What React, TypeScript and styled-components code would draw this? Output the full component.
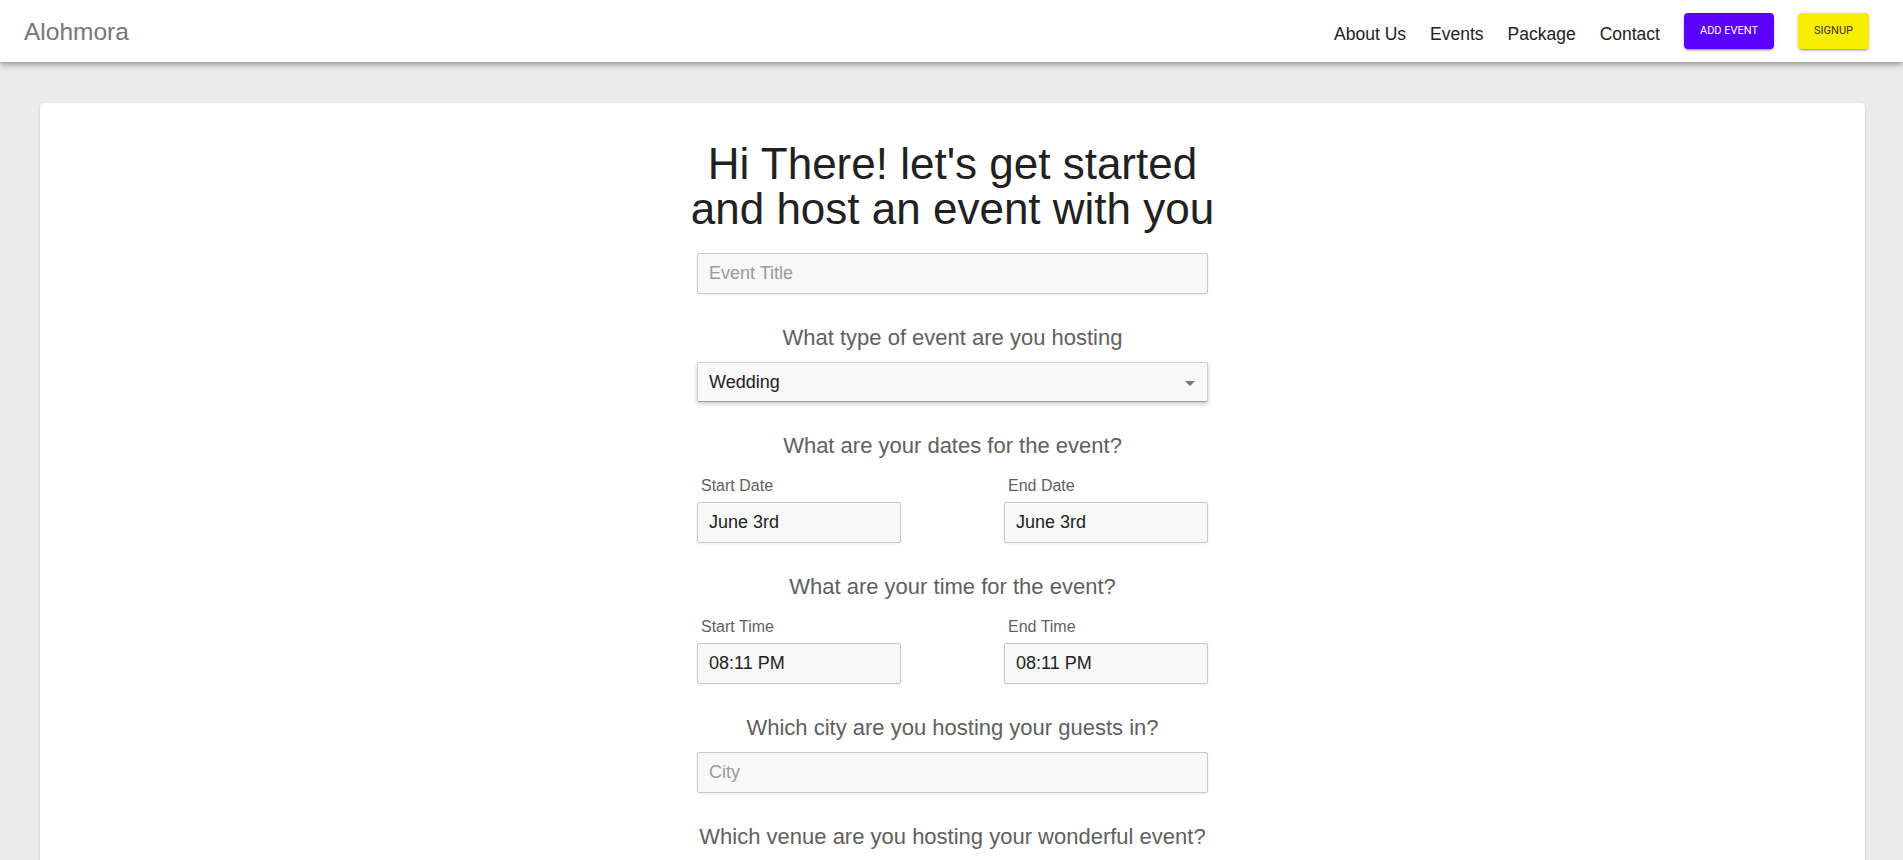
import React from "react";
import styled, { createGlobalStyle } from "styled-components";

const GlobalStyle = createGlobalStyle`
  html, body {
    margin: 0;
    padding: 0;
    background: #ebebeb;
    font-family: "Liberation Sans", Arial, sans-serif;
  }
  * { box-sizing: border-box; }
`;

const Header = styled.header`
  height: 62px;
  background: #ffffff;
  display: flex;
  align-items: center;
  justify-content: space-between;
  padding: 0 34px 0 24px;
  box-shadow: 0 2px 4px -1px rgba(0,0,0,0.2), 0 4px 5px 0 rgba(0,0,0,0.14), 0 1px 10px 0 rgba(0,0,0,0.12);
  position: relative;
  z-index: 2;
`;

const Logo = styled.div`
  font-size: 24.5px;
  color: #777777;
  margin-top: 2px;
`;

const Nav = styled.nav`
  display: flex;
  align-items: center;
  gap: 24px;
`;

const NavLink = styled.a`
  font-size: 17.5px;
  color: #222222;
  text-decoration: none;
  cursor: pointer;
  margin-top: 6px;
`;

const Button = styled.button<{ $bg: string; $fg: string }>`
  height: 36px;
  padding: 0 16px 2px;
  border: none;
  border-radius: 4px;
  background: ${(p) => p.$bg};
  color: ${(p) => p.$fg};
  font-family: Roboto, "Liberation Sans", sans-serif;
  font-size: 11px;
  text-transform: uppercase;
  box-shadow: 0 3px 1px -2px rgba(0,0,0,0.2), 0 2px 2px 0 rgba(0,0,0,0.14), 0 1px 5px 0 rgba(0,0,0,0.12);
  cursor: pointer;
`;

const Main = styled.main`
  padding: 41px 38px 0 40px;
`;

const Card = styled.section`
  background: #ffffff;
  border-radius: 4px;
  min-height: 900px;
  box-shadow: 0 2px 1px -1px rgba(0,0,0,0.2), 0 1px 1px 0 rgba(0,0,0,0.14), 0 1px 3px 0 rgba(0,0,0,0.12);
  display: flex;
  flex-direction: column;
  align-items: center;
  padding-top: 38px;
`;

const Title = styled.h1`
  margin: 0;
  font-weight: 400;
  font-size: 44px;
  line-height: 45px;
  color: #212121;
  text-align: center;
`;

const Form = styled.form`
  width: 511px;
  margin-top: 22px;
  display: flex;
  flex-direction: column;
`;

const Question = styled.div`
  margin-top: 32px;
  margin-bottom: 12px;
  font-size: 22px;
  line-height: 24px;
  color: #606060;
  text-align: center;
`;

const TextInput = styled.input`
  width: 100%;
  height: 41px;
  border: 1px solid #c9c9c9;
  border-radius: 2px;
  background: #f8f8f8;
  padding: 0 11px;
  font-family: "Liberation Sans", Arial, sans-serif;
  font-size: 18px;
  color: #222222;
  box-shadow: 0 1px 3px rgba(0,0,0,0.08);
  outline: none;
  &::placeholder {
    color: #9a9a9a;
  }
`;

const SelectBox = styled.div`
  width: 100%;
  height: 40px;
  border: 1px solid #d0d0d0;
  border-bottom-color: #9e9e9e;
  border-radius: 2px;
  background: #f8f8f8;
  padding: 0 12px 0 11px;
  display: flex;
  align-items: center;
  justify-content: space-between;
  font-size: 18px;
  color: #222222;
  box-shadow: 0 2px 4px rgba(0,0,0,0.22);
  cursor: pointer;
`;

const Pair = styled.div`
  display: flex;
  justify-content: space-between;
`;

const Field = styled.div`
  width: 204px;
  display: flex;
  flex-direction: column;
`;

const SubLabel = styled.label`
  padding: 5px 0 0 4px;
  margin-bottom: 5px;
  font-size: 16px;
  line-height: 22px;
  color: #5f5f5f;
`;

const Arrow = () => (
  <svg width="10" height="5" viewBox="7 10 10 5" style={{ marginTop: 2 }}>
    <path d="M7 10l5 5 5-5z" fill="#757575" />
  </svg>
);

export default function App() {
  return (
    <>
      <GlobalStyle />
      <Header>
        <Logo>Alohmora</Logo>
        <Nav>
          <NavLink>About Us</NavLink>
          <NavLink>Events</NavLink>
          <NavLink>Package</NavLink>
          <NavLink>Contact</NavLink>
          <Button $bg="#5a00ff" $fg="#ffffff">Add Event</Button>
          <Button $bg="#f8ec00" $fg="#3a3a1a">Signup</Button>
        </Nav>
      </Header>
      <Main>
        <Card>
          <Title>
            Hi There! let's get started
            <br />
            and host an event with you
          </Title>
          <Form onSubmit={(e) => e.preventDefault()}>
            <TextInput placeholder="Event Title" />
            <Question>What type of event are you hosting</Question>
            <SelectBox>
              <span>Wedding</span>
              <Arrow />
            </SelectBox>
            <Question>What are your dates for the event?</Question>
            <Pair>
              <Field>
                <SubLabel>Start Date</SubLabel>
                <TextInput defaultValue="June 3rd" />
              </Field>
              <Field>
                <SubLabel>End Date</SubLabel>
                <TextInput defaultValue="June 3rd" />
              </Field>
            </Pair>
            <Question>What are your time for the event?</Question>
            <Pair>
              <Field>
                <SubLabel>Start Time</SubLabel>
                <TextInput defaultValue="08:11 PM" />
              </Field>
              <Field>
                <SubLabel>End Time</SubLabel>
                <TextInput defaultValue="08:11 PM" />
              </Field>
            </Pair>
            <Question>Which city are you hosting your guests in?</Question>
            <TextInput placeholder="City" />
            <Question>Which venue are you hosting your wonderful event?</Question>
            <TextInput placeholder="Venue" />
          </Form>
        </Card>
      </Main>
    </>
  );
}
